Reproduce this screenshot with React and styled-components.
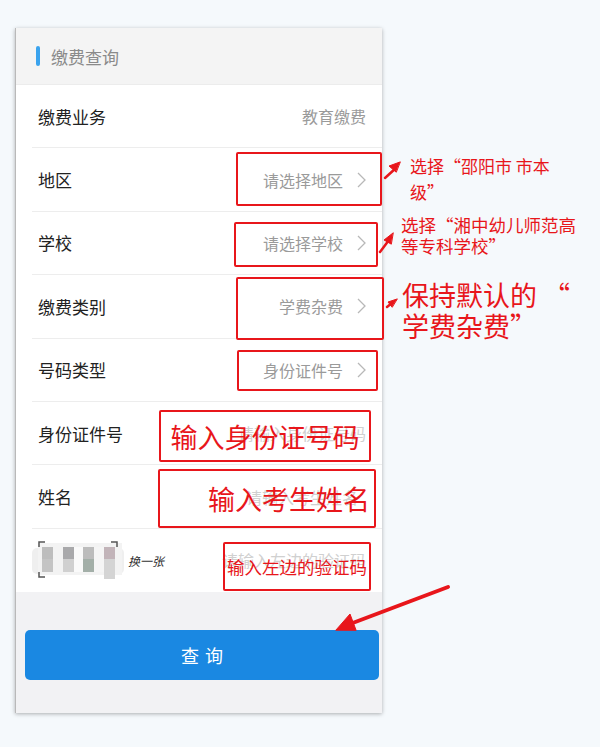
import React from "react";
import styled, { createGlobalStyle } from "styled-components";

const GlobalStyle = createGlobalStyle`
  html, body {
    margin: 0;
    padding: 0;
    background: #f5f9fc;
  }
  body {
    font-family: "Noto Sans CJK SC", "Noto Sans", sans-serif;
  }
`;

const Page = styled.div`
  position: relative;
  width: 600px;
  height: 747px;
  padding: 28px 0 0 15px;
  box-sizing: border-box;
  overflow: hidden;
`;

const Card = styled.div`
  width: 367px;
  height: 685px;
  background: #f2f2f4;
  box-shadow: 0 1px 4px rgba(0, 0, 0, 0.3);
  border-left: 1px solid #b9b9b9;
  box-sizing: border-box;
  display: flex;
  flex-direction: column;
`;

const Header = styled.div`
  height: 57px;
  background: #f4f4f4;
  display: flex;
  align-items: center;
  padding-left: 20px;
  gap: 11px;
  color: #8a8a8a;
  font-size: 17px;
  border-bottom: 1px solid #ececec;
  box-sizing: border-box;
`;

const BlueBar = styled.span`
  width: 4px;
  height: 20px;
  border-radius: 2px;
  background: #3aa3ee;
`;

const List = styled.div`
  background: #fff;
  padding-left: 16px;
`;

const Row = styled.div`
  height: 63.4px;
  display: flex;
  align-items: center;
  justify-content: space-between;
  padding: 0 16px 0 6px;
  border-bottom: ${(p) => (p.$last ? "none" : "1px solid #ededed")};
  box-sizing: border-box;
`;

const Label = styled.span`
  font-size: 17px;
  color: #222;
`;

const Value = styled.span`
  display: flex;
  align-items: center;
  gap: 14px;
  font-size: 16px;
  color: #9a9a9a;
`;

const Placeholder = styled.span`
  font-size: 16px;
  color: #d0d0d0;
  margin-right: ${(p) => p.$mr || 0}px;
`;

const Captcha = styled.div`
  display: flex;
  align-items: center;
  gap: 4px;
  margin-left: -6px;
`;

const Swap = styled.span`
  font-size: 12px;
  font-style: italic;
  color: #333;
`;

const Bottom = styled.div`
  flex: 1;
  padding: 38px 3px 0 9px;
`;

const QueryButton = styled.button`
  width: 100%;
  height: 50px;
  border: none;
  border-radius: 5px;
  background: #1a88e2;
  color: #fff;
  font-family: "Noto Sans CJK SC", sans-serif;
  font-size: 18px;
  letter-spacing: 6px;
  text-indent: 6px;
`;

const RedBox = styled.div`
  position: absolute;
  border: 2px solid #e8161b;
  border-radius: 2px;
  box-sizing: border-box;
  display: flex;
  align-items: center;
  justify-content: ${(p) => p.$justify || "flex-start"};
  padding: 0 4px;
  color: #e8161b;
  font-size: ${(p) => p.$size || 27}px;
  white-space: nowrap;
`;

const Note = styled.div`
  position: absolute;
  color: #e8161b;
  font-size: ${(p) => p.$size}px;
  line-height: ${(p) => p.$lh}px;
  width: ${(p) => p.$w}px;
`;

const Arrows = styled.svg`
  position: absolute;
  left: 0;
  top: 0;
  pointer-events: none;
`;

const Chevron = () => (
  <svg width="9" height="16" viewBox="0 0 9 16">
    <polyline points="1,1 8,8 1,15" fill="none" stroke="#b8b8b8" strokeWidth="1.3" />
  </svg>
);

const CaptchaImage = () => (
  <svg width="92" height="42" viewBox="0 0 92 42">
    <rect x="0" y="9" width="92" height="26" fill="#efefef" rx="5" />
    <rect x="6" y="4" width="84" height="32" fill="#f3f3f3" />
    <rect x="10" y="8" width="11" height="12" fill="#bdbdbd" />
    <rect x="10" y="20" width="11" height="13" fill="#c4c4c4" />
    <rect x="31" y="8" width="11" height="12" fill="#a9a9ab" />
    <rect x="31" y="20" width="11" height="13" fill="#d0d0d0" />
    <rect x="42" y="8" width="9" height="25" fill="#fafafa" />
    <rect x="51" y="8" width="11" height="12" fill="#bcbcbc" />
    <rect x="51" y="20" width="11" height="13" fill="#a3afa8" />
    <rect x="62" y="8" width="10" height="25" fill="#f5f5f5" />
    <rect x="72" y="8" width="11" height="12" fill="#c2b4b9" />
    <rect x="72" y="20" width="11" height="20" fill="#d4d4d4" />
    <path d="M7 8 V3 H13 M79 3 H85 V8 M7 33 V38 H13" fill="none" stroke="#555" strokeWidth="1.5" />
  </svg>
);

const rows = [
  { label: "缴费业务", value: "教育缴费" },
  { label: "地区", value: "请选择地区", arrow: true },
  { label: "学校", value: "请选择学校", arrow: true },
  { label: "缴费类别", value: "学费杂费", arrow: true },
  { label: "号码类型", value: "身份证件号", arrow: true },
];

export default function App() {
  return (
    <>
      <GlobalStyle />
      <Page>
        <Card>
          <Header>
            <BlueBar />
            缴费查询
          </Header>
          <List>
            {rows.map((r) => (
              <Row key={r.label}>
                <Label>{r.label}</Label>
                <Value>
                  {r.value}
                  {r.arrow && <Chevron />}
                </Value>
              </Row>
            ))}
            <Row>
              <Label>身份证件号</Label>
              <Placeholder>请输入身份证号码</Placeholder>
            </Row>
            <Row>
              <Label>姓名</Label>
              <Placeholder $mr={8}>请输入考生姓名</Placeholder>
            </Row>
            <Row $last>
              <Captcha>
                <CaptchaImage />
                <Swap>换一张</Swap>
              </Captcha>
              <Placeholder>请输入左边的验证码</Placeholder>
            </Row>
          </List>
          <Bottom>
            <QueryButton>查询</QueryButton>
          </Bottom>
        </Card>

        <RedBox style={{ left: 236, top: 152, width: 146, height: 54 }} />
        <RedBox style={{ left: 234, top: 222, width: 144, height: 45 }} />
        <RedBox style={{ left: 236, top: 277, width: 148, height: 63 }} />
        <RedBox style={{ left: 237, top: 350, width: 141, height: 41 }} />
        <RedBox style={{ left: 159, top: 410, width: 212, height: 52 }} $justify="center">
          输入身份证号码
        </RedBox>
        <RedBox style={{ left: 158, top: 469, width: 218, height: 59 }} $justify="flex-end">
          输入考生姓名
        </RedBox>
        <RedBox style={{ left: 223, top: 542, width: 148, height: 49 }} $size={17.5} $justify="center">
          输入左边的验证码
        </RedBox>

        <Note style={{ left: 410, top: 153 }} $size={17} $lh={26} $w={160}>
          选择“邵阳市 市本级”
        </Note>
        <Note style={{ left: 401, top: 214 }} $size={17.5} $lh={21} $w={190}>
          选择“湘中幼儿师范高等专科学校”
        </Note>
        <Note style={{ left: 402, top: 279 }} $size={27} $lh={31} $w={190}>
          保持默认的 “
          <br />
          学费杂费”
        </Note>

        <Arrows width="600" height="747" viewBox="0 0 600 747">
          <g fill="#e8161b" stroke="#e8161b" strokeLinecap="round">
            <line x1="385" y1="178" x2="396" y2="168" strokeWidth="2.5" />
            <polygon points="400,162 389,166 396,172" />
            <line x1="380" y1="252" x2="389" y2="240" strokeWidth="2.5" />
            <polygon points="393,233 384,240 391,244" />
            <line x1="387" y1="307" x2="392" y2="303" strokeWidth="2.5" />
            <polygon points="397,299 388,302 392,307" />
            <line x1="448" y1="587" x2="350" y2="624" strokeWidth="4" />
            <polygon points="336,630 350,614 356,630" />
          </g>
        </Arrows>
      </Page>
    </>
  );
}
